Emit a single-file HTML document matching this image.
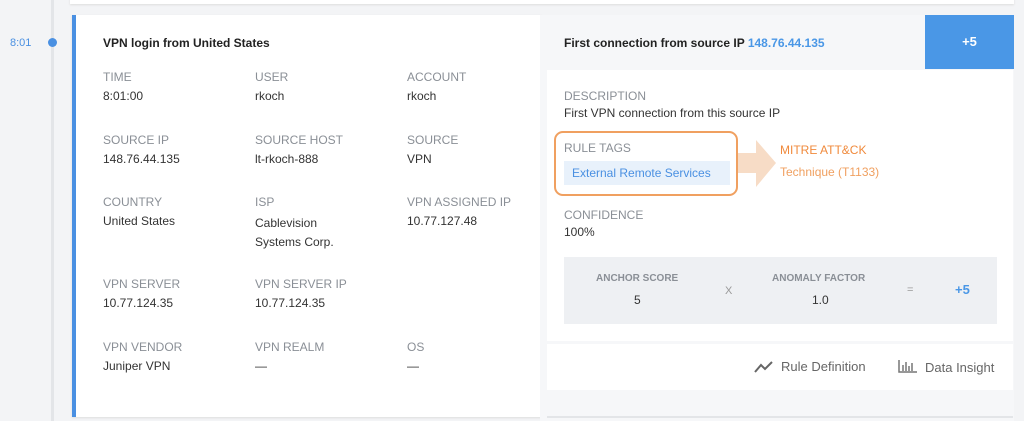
<!DOCTYPE html>
<html><head><style>
*{margin:0;padding:0;box-sizing:border-box}
body{width:1024px;height:421px;background:#f3f4f6;font-family:"Liberation Sans",sans-serif;position:relative;overflow:hidden;color:#333}
.a{position:absolute;white-space:nowrap}
.l{font-size:12px;color:#8a8f96}
.v{font-size:12px;color:#333}
</style></head><body>
<div class="a" style="left:70px;top:-10px;width:944px;height:14px;background:#fff;box-shadow:0 1px 2px #ddd"></div>
<div class="a" style="left:51px;top:0;width:3px;height:421px;background:#e3e5e8"></div>
<div class="a" style="left:48px;top:38px;width:9px;height:9px;border-radius:50%;background:#4a90e2"></div>
<div class="a" style="left:10px;top:37px;font-size:11px;color:#4a90e2">8:01</div>
<div class="a" style="left:72px;top:15px;width:470px;height:402px;background:#fff;border-left:4px solid #4a90e2;box-shadow:0 1px 2px #ddd"></div>
<div class="a" style="left:103px;top:36px;font-size:12px;font-weight:bold;color:#222">VPN login from United States</div>
<div class="a l" style="left:103px;top:70px">TIME</div><div class="a v" style="left:103px;top:89px">8:01:00</div>
<div class="a l" style="left:255px;top:70px">USER</div><div class="a v" style="left:255px;top:89px">rkoch</div>
<div class="a l" style="left:407px;top:70px">ACCOUNT</div><div class="a v" style="left:407px;top:89px">rkoch</div>
<div class="a l" style="left:103px;top:133px">SOURCE IP</div><div class="a v" style="left:103px;top:152px">148.76.44.135</div>
<div class="a l" style="left:255px;top:133px">SOURCE HOST</div><div class="a v" style="left:255px;top:152px">lt-rkoch-888</div>
<div class="a l" style="left:407px;top:133px">SOURCE</div><div class="a v" style="left:407px;top:152px">VPN</div>
<div class="a l" style="left:103px;top:195px">COUNTRY</div><div class="a v" style="left:103px;top:214px">United States</div>
<div class="a l" style="left:255px;top:195px">ISP</div><div class="a v" style="left:255px;top:214px;line-height:19px">Cablevision<br>Systems Corp.</div>
<div class="a l" style="left:407px;top:195px">VPN ASSIGNED IP</div><div class="a v" style="left:407px;top:214px">10.77.127.48</div>
<div class="a l" style="left:103px;top:277px">VPN SERVER</div><div class="a v" style="left:103px;top:296px">10.77.124.35</div>
<div class="a l" style="left:255px;top:277px">VPN SERVER IP</div><div class="a v" style="left:255px;top:296px">10.77.124.35</div>
<div class="a l" style="left:103px;top:340px">VPN VENDOR</div><div class="a v" style="left:103px;top:359px">Juniper VPN</div>
<div class="a l" style="left:255px;top:340px">VPN REALM</div><div class="a v" style="left:255px;top:359px">—</div>
<div class="a l" style="left:407px;top:340px">OS</div><div class="a v" style="left:407px;top:359px">—</div>

<div class="a" style="left:540px;top:15px;width:474px;height:406px;background:#f6f7f9"></div>
<div class="a" style="left:925px;top:15px;width:89px;height:54px;background:#4a97e6;color:#fff;font-size:13px;font-weight:bold;text-align:center;line-height:54px">+5</div>
<div class="a" style="left:564px;top:36px;font-size:12px;font-weight:bold;color:#222">First connection from source IP <span style="color:#4a97e6">148.76.44.135</span></div>
<div class="a" style="left:547px;top:70px;width:466px;height:271px;background:#fff"></div>
<div class="a" style="left:547px;top:344px;width:466px;height:46px;background:#fff"></div>
<div class="a l" style="left:564px;top:89px">DESCRIPTION</div><div class="a v" style="left:564px;top:106px">First VPN connection from this source IP</div>
<div class="a" style="left:554px;top:131px;width:184px;height:65px;border:2px solid #f0a060;border-radius:9px"></div>
<div class="a l" style="left:564px;top:141px">RULE TAGS</div>
<div class="a" style="left:564px;top:161px;width:166px;height:24px;background:#e8f1fb;color:#4a90e2;font-size:12px;line-height:24px;padding-left:8px">External Remote Services</div>
<svg class="a" style="left:738px;top:140px" width="40" height="47"><path d="M0 13H18V0L38 23L18 47V33H0Z" fill="#f7dcc6"/></svg>
<div class="a" style="left:780px;top:143px;font-size:12px;color:#f08a3c">MITRE ATT&amp;CK</div>
<div class="a" style="left:780px;top:165px;font-size:12px;color:#f0a060">Technique (T1133)</div>
<div class="a l" style="left:564px;top:208px">CONFIDENCE</div><div class="a v" style="left:564px;top:225px">100%</div>
<div class="a" style="left:564px;top:257px;width:433px;height:67px;background:#eef0f3"></div>
<div class="a" style="left:596px;top:273px;font-size:10px;font-weight:bold;color:#8a8f96">ANCHOR SCORE</div>
<div class="a v" style="left:634px;top:293px">5</div>
<div class="a" style="left:725px;top:285px;font-size:11px;color:#999">X</div>
<div class="a" style="left:772px;top:273px;font-size:10px;font-weight:bold;color:#8a8f96">ANOMALY FACTOR</div>
<div class="a v" style="left:812px;top:293px">1.0</div>
<div class="a" style="left:907px;top:284px;font-size:11px;color:#999">=</div>
<div class="a" style="left:955px;top:282px;font-size:13px;font-weight:bold;color:#4a97e6">+5</div>
<svg class="a" style="left:754px;top:360px" width="20" height="14"><path d="M1 12L7 5L11 9L18 2" stroke="#666" stroke-width="2" fill="none"/></svg>
<div class="a" style="left:781px;top:359px;font-size:13px;color:#666">Rule Definition</div>
<svg class="a" style="left:898px;top:359px" width="20" height="15"><path d="M1 1V13H19M5 12V6M8 12V3M11 12V7M14 12V4" stroke="#777" stroke-width="1.5" fill="none"/></svg>
<div class="a" style="left:925px;top:360px;font-size:13px;color:#666">Data Insight</div>
<div class="a" style="left:547px;top:416px;width:466px;height:2px;background:#e3e5e8"></div>
</body></html>
